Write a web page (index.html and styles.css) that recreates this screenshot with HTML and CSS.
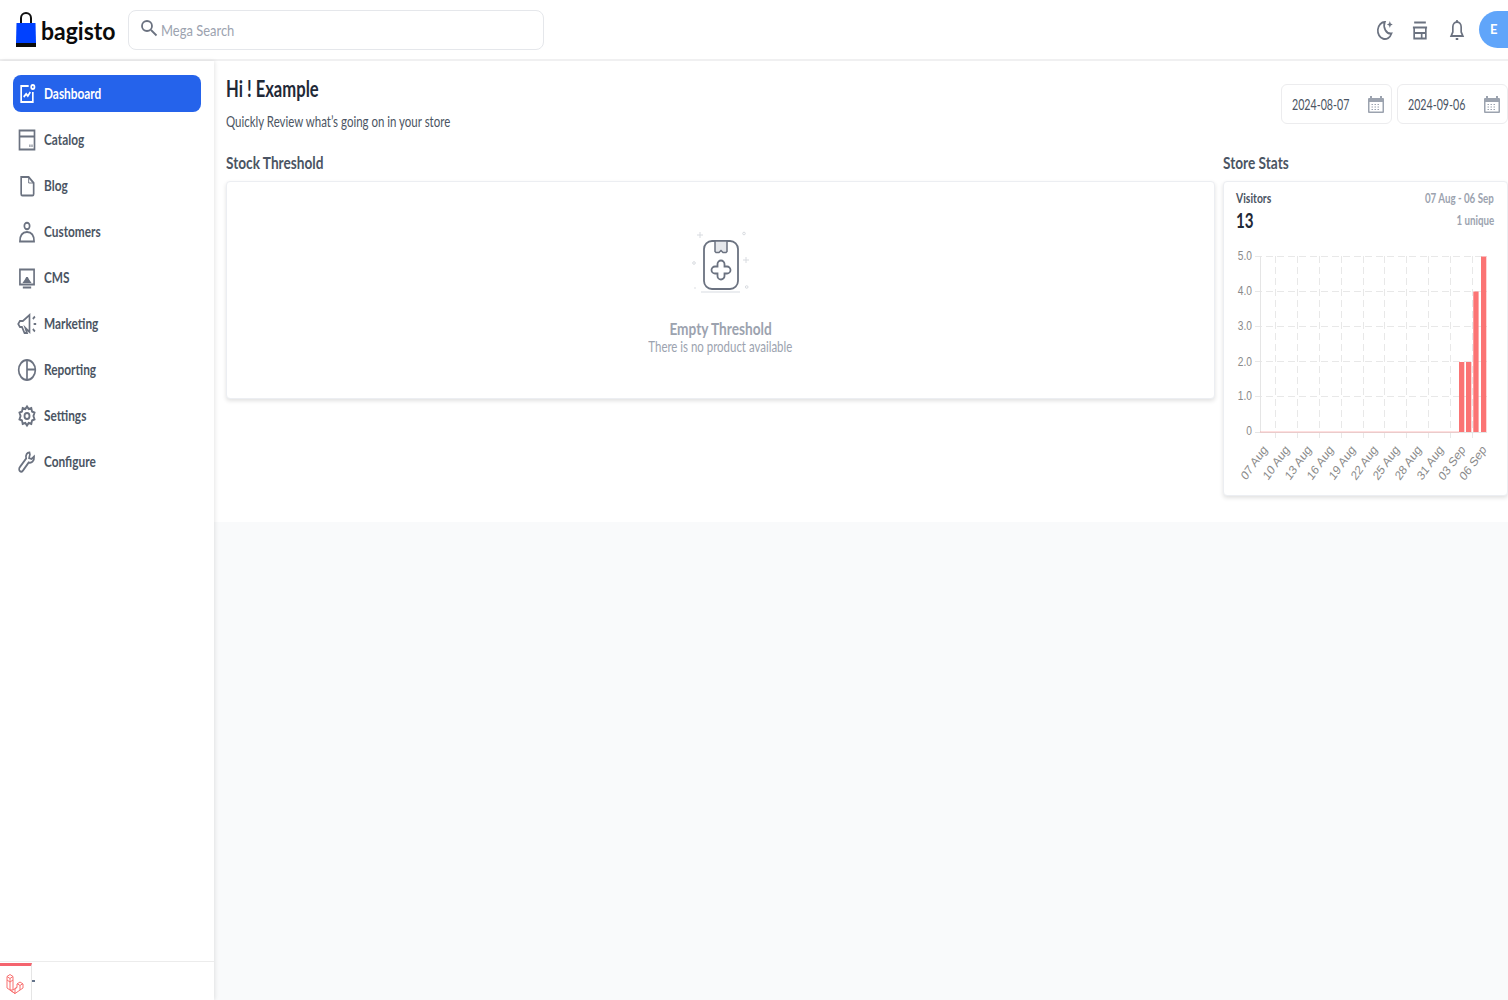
FILE: index.html
```html
<!DOCTYPE html>
<html lang="en">
<head>
<meta charset="utf-8">
<title>Dashboard</title>
<link rel="stylesheet" href="styles.css">
</head>
<body>
<header class="topbar">
  <div class="topbar-left">
    <a class="logo">
      <svg class="logo-bag" viewBox="0 0 22 36" width="22" height="36"><path d="M6 13V6a5 5 0 0 1 10 0v7" fill="none" stroke="#111" stroke-width="2"/><path d="M1.500 11h19l.5 20H1z" fill="#0041ff"/><path d="M1 31h20v4H1z" fill="#0b0b0b"/></svg>
      <span class="logo-text">bagisto</span>
    </a>
    <div class="search">
      <svg viewBox="0 0 20 20" width="20" height="20" fill="none" stroke="#6b7280" stroke-width="1.800"><circle cx="8" cy="8" r="5"/><path d="M12 12l5.500 5.500"/></svg>
      <span>Mega Search</span>
    </div>
  </div>
  <div class="topbar-right">
    <svg viewBox="0 0 24 24" width="20" height="24" preserveAspectRatio="none" fill="none" stroke="#6b7280" stroke-width="2"><path d="M13 4a8.500 8.500 0 1 0 8 11.500A8 8 0 0 1 13 4z"/><path d="M19 3l1 2.500L22.500 6.500 20 7.500 19 10l-1-2.500L15.500 6.500 18 5.500z" fill="#6b7280" stroke="none"/></svg>
    <svg viewBox="0 0 24 24" width="20" height="24" preserveAspectRatio="none" fill="none" stroke="#6b7280" stroke-width="2"><path d="M5 4.500h14M3.500 9.500h17M5 9.500v11h14v-11M5 15h14M14 15v5.500"/></svg>
    <svg viewBox="0 0 24 24" width="20" height="24" preserveAspectRatio="none" fill="none" stroke="#6b7280" stroke-width="2"><path d="M12 4a5 5 0 0 0-5 5v5l-2 4h14l-2-4V9a5 5 0 0 0-5-5z"/><path d="M12 2v2M10.500 21h3"/></svg>
    <div class="avatar">E</div>
  </div>
</header>
<div class="layout">
  <aside class="sidebar">
    <nav class="nav">
      <a class="nav-item active">
        <svg viewBox="0 0 24 24" width="20" height="24" preserveAspectRatio="none" fill="none" stroke="#fff" stroke-width="2"><path d="M14 4H5v16h14V10"/><circle cx="19" cy="5" r="2"/><path d="M8 15l3-3 2 2 3-4"/></svg>
        <span>Dashboard</span></a>
      <a class="nav-item">
        <svg viewBox="0 0 24 24" width="20" height="24" preserveAspectRatio="none" fill="none" stroke="#6b7280" stroke-width="2"><path d="M3 2.500h18v19H3zM3 8.500h18"/><path d="M15.500 16.500v2.500M18 16.500v2.500" stroke-width="1.200"/></svg>
        <span>Catalog</span></a>
      <a class="nav-item">
        <svg viewBox="0 0 24 24" width="20" height="24" preserveAspectRatio="none" fill="none" stroke="#6b7280" stroke-width="2"><path d="M5 3h9l6 6v11a1.500 1.500 0 0 1-1.500 1.500h-12A1.500 1.500 0 0 1 5 20z"/><path d="M14 3v6h6" stroke-width="1"/></svg>
        <span>Blog</span></a>
      <a class="nav-item">
        <svg viewBox="0 0 24 24" width="20" height="24" preserveAspectRatio="none" fill="none" stroke="#6b7280" stroke-width="2"><circle cx="12" cy="6" r="3.200"/><path d="M3.500 21.500c0-6.500 3-9.500 8.500-9.500s8.500 3 8.500 9.500z"/></svg>
        <span>Customers</span></a>
      <a class="nav-item">
        <svg viewBox="0 0 24 24" width="20" height="24" preserveAspectRatio="none" fill="none" stroke="#6b7280" stroke-width="2"><path d="M3.500 3.500h17v15h-17zM7 21.500h10"/><path d="M6.500 17l3-3.500 1.500-2.500h2l1.500 2.500 3 3.500z" fill="#6b7280" stroke="none"/></svg>
        <span>CMS</span></a>
      <a class="nav-item">
        <svg viewBox="0 0 24 24" width="20" height="24" preserveAspectRatio="none" fill="none" stroke="#6b7280" stroke-width="2"><path d="M15 3L7 9H3.500l-2 3 2 3H6l3 6h3l-2-5 5 4z"/><path d="M19 7l2.500-2.500M20 12h3M19 17l2.500 2.500"/></svg>
        <span>Marketing</span></a>
      <a class="nav-item">
        <svg viewBox="0 0 24 24" width="20" height="24" preserveAspectRatio="none" fill="none" stroke="#6b7280" stroke-width="2"><circle cx="12" cy="12" r="10"/><path d="M12 2v20M12 11.500h10"/></svg>
        <span>Reporting</span></a>
      <a class="nav-item">
        <svg viewBox="0 0 24 24" width="20" height="24" preserveAspectRatio="none" fill="none" stroke="#6b7280" stroke-width="2.200"><circle cx="12" cy="12" r="3"/><path d="M12 2.500l2 2.500 3.200-.8.800 3.200 3 1.300-1.300 3.300 1.300 3.300-3 1.300-.8 3.200-3.200-.8-2 2.500-2-2.500-3.200.8-.8-3.200-3-1.300L4.300 12 3 8.700l3-1.300.8-3.200 3.200.8z"/></svg>
        <span>Settings</span></a>
      <a class="nav-item">
        <svg viewBox="0 0 24 24" width="20" height="24" preserveAspectRatio="none" fill="none" stroke="#6b7280" stroke-width="2"><path d="M15 2.500c-3 0-5 2.500-4 6L3.500 17c-1.500 1.600-1 3.600 0 4.200 1.200.8 2.700.4 3.700-.7L14 12.500c3.500 1 7-1.500 6.500-6l-3 2.500-3-1 1-3.500z"/></svg>
        <span>Configure</span></a>
    </nav>
    <footer class="sidebar-foot">
      <div class="debug-tab">
        <svg viewBox="0 0 18 22" width="18" height="22" fill="none" stroke="#f87171" stroke-width="1"><path d="M1 3.500l3-2 3 2v3.500l-3 2-3-2zM4 5.500v3.500M1 3.500l3 2 3-2"/><path d="M1 7v8l8 5.500 8-5.500v-4l-3-2-3 2v3.500L7 17V7"/><path d="M4 9v8l5 3.500M11 10.500l3 2 3-2M14 12.500v4.500M7 17l-3 0M11 14l-2 1.500v5"/></svg>
      </div>
      <i class="debug-dot"></i>
    </footer>
  </aside>
  <main class="main">
    <section class="panel">
      <div class="page-head">
        <div class="page-title">
          <h1>Hi ! Example</h1>
          <p>Quickly Review what’s going on in your store</p>
        </div>
        <div class="dates">
          <div class="date"><span>2024-08-07</span>
            <svg viewBox="0 0 16 18" width="16" height="18"><path d="M1 3h14a1 1 0 0 1 1 1v13a1 1 0 0 1-1 1H1a1 1 0 0 1-1-1V4a1 1 0 0 1 1-1z" fill="#9ca3af"/><path d="M3 1v3M13 1v3" stroke="#9ca3af" stroke-width="2"/><path d="M1.500 7h13v9.500h-13z" fill="#fff"/><path d="M3.500 9.500h9M3.500 12h9M3.500 14.500h9" stroke="#9ca3af" stroke-width="1.200" stroke-dasharray="1.500 1.500"/></svg></div>
          <div class="date"><span>2024-09-06</span>
            <svg viewBox="0 0 16 18" width="16" height="18"><path d="M1 3h14a1 1 0 0 1 1 1v13a1 1 0 0 1-1 1H1a1 1 0 0 1-1-1V4a1 1 0 0 1 1-1z" fill="#9ca3af"/><path d="M3 1v3M13 1v3" stroke="#9ca3af" stroke-width="2"/><path d="M1.500 7h13v9.500h-13z" fill="#fff"/><path d="M3.500 9.500h9M3.500 12h9M3.500 14.500h9" stroke="#9ca3af" stroke-width="1.200" stroke-dasharray="1.500 1.500"/></svg></div>
        </div>
      </div>
      <div class="columns">
        <div class="col-left">
          <h2>Stock Threshold</h2>
          <div class="card empty">
            <svg class="empty-icon" viewBox="0 0 60 66" width="60" height="66" fill="none">
              <path d="M9 0v6M6 3h6M55 25v6M52 28h6" stroke="#d8dbe0" stroke-width="1"/>
              <circle cx="53" cy="1.500" r="1.300" stroke="#d8dbe0"/>
              <circle cx="3" cy="31" r="1.300" stroke="#d8dbe0"/>
              <circle cx="4" cy="56" r=".8" fill="#d8dbe0"/>
              <circle cx="55.700" cy="55" r="1.300" stroke="#d8dbe0"/>
              <rect x="13" y="9" width="34" height="48" rx="8" stroke="#6b7280" stroke-width="1.800"/>
              <path d="M24 9h12v10.500l-1 1h-3l-2-2-2 2h-3l-1-1z" fill="#e5e7eb" stroke="#6b7280" stroke-width="1.500"/>
              <path d="M26.500 34.500V32a3.500 3.500 0 0 1 7 0v2.500H36a3.500 3.500 0 0 1 0 7h-2.500V44a3.500 3.500 0 0 1-7 0v-2.500H24a3.500 3.500 0 0 1 0-7z" stroke="#6b7280" stroke-width="1.800"/>
              <path d="M10 60h39" stroke="#e5e7eb" stroke-width="1.500"/>
            </svg>
            <strong>Empty Threshold</strong>
            <span>There is no product available</span>
          </div>
        </div>
        <div class="col-right">
          <h2>Store Stats</h2>
          <div class="card stats">
            <div class="stats-row">
              <b class="stats-label">Visitors</b>
              <span class="stats-meta">07 Aug - 06 Sep</span>
            </div>
            <div class="stats-row stats-row-2">
              <b class="stats-count">13</b>
              <span class="stats-meta">1 unique</span>
            </div>
            <svg class="chart" viewBox="1224 240 284 250" width="284" height="250">
              <g stroke="#e8e8e8" stroke-width="1" stroke-dasharray="7 4" fill="none">
                <path d="M1255 256.500H1487M1255 291.500H1487M1255 326.500H1487M1255 361.500H1487M1255 396.500H1487"/>
                <path d="M1275.500 256V438M1297.500 256V438M1319.500 256V438M1341.500 256V438M1363.500 256V438M1384.500 256V438M1406.500 256V438M1428.500 256V438M1450.500 256V438M1472.500 256V438"/>
              </g>
              <path d="M1260.500 256V432M1255 432.500H1487" stroke="#e5e5e5" fill="none"/>
              <path d="M1260 432h199" stroke="#f87171" stroke-opacity=".45" stroke-width="1"/>
              <g fill="#fb7474">
                <rect x="1459" y="362" width="5.300" height="70"/>
                <rect x="1466" y="362" width="5.300" height="70"/>
                <rect x="1473.300" y="291.500" width="5.300" height="140.500"/>
                <rect x="1481" y="256.500" width="5.300" height="175.500"/>
              </g>
              <g class="y-labels" text-anchor="end" transform="translate(1252 0) scale(.85 1)">
                <text x="0" y="260.500">5.0</text>
                <text x="0" y="295.500">4.0</text>
                <text x="0" y="330.500">3.0</text>
                <text x="0" y="366">2.0</text>
                <text x="0" y="400.500">1.0</text>
                <text x="0" y="435.500">0</text>
              </g>
              <g class="x-labels" text-anchor="end">
                <text transform="translate(1268 450) scale(.85 1) rotate(-50)">07 Aug</text>
                <text transform="translate(1290 450) scale(.85 1) rotate(-50)">10 Aug</text>
                <text transform="translate(1312 450) scale(.85 1) rotate(-50)">13 Aug</text>
                <text transform="translate(1334 450) scale(.85 1) rotate(-50)">16 Aug</text>
                <text transform="translate(1356 450) scale(.85 1) rotate(-50)">19 Aug</text>
                <text transform="translate(1378 450) scale(.85 1) rotate(-50)">22 Aug</text>
                <text transform="translate(1400 450) scale(.85 1) rotate(-50)">25 Aug</text>
                <text transform="translate(1422 450) scale(.85 1) rotate(-50)">28 Aug</text>
                <text transform="translate(1444 450) scale(.85 1) rotate(-50)">31 Aug</text>
                <text transform="translate(1466 450) scale(.85 1) rotate(-50)">03 Sep</text>
                <text transform="translate(1487 450) scale(.85 1) rotate(-50)">06 Sep</text>
              </g>
            </svg>
          </div>
        </div>
      </div>
    </section>
  </main>
</div>
</body>
</html>
```
FILE: styles.css
```css
* { box-sizing: border-box; }
html, body { margin: 0; height: 100%; }
body {
  height: 1000px;
  overflow: hidden;
  background: #fff;
  color: #1f2937;
  font-family: "Lato", "Noto Sans", sans-serif;
  font-size: 14px;
}
svg { display: block; flex: none; }
h1, h2, p { margin: 0; }

.topbar {
  height: 61px;
  display: flex;
  align-items: center;
  justify-content: space-between;
  padding: 0 0 0 15px;
  border-bottom: 2px solid #f0f0f1;
  background: #fff;
}
.topbar-left { display: flex; align-items: center; gap: 13px; }
.logo { display: flex; align-items: center; gap: 4px; width: 100px; }
.logo-text { font-size: 25px; font-weight: 700; color: #0b0b0b; transform: scaleX(.92); transform-origin: left center; }
.search {
  width: 416px;
  height: 40px;
  display: flex;
  align-items: center;
  gap: 2px;
  padding: 0 10px;
  border: 1px solid #e5e7eb;
  border-radius: 8px;
  color: #9ca3af;
  font-size: 16px;
}
.search svg { margin-top: -3px; }
.search span { transform: scaleX(.81); transform-origin: left center; white-space: nowrap; }
.topbar-right { display: flex; align-items: center; gap: 16.500px; color: #6b7280; }
.avatar {
  width: 29px;
  height: 37px;
  padding-left: 11px;
  margin-left: -4px;
  border-radius: 19px 0 0 19px;
  background: #60a5fa;
  color: #fff;
  font-weight: 700;
  line-height: 37px;
  font-size: 13px;
  overflow: hidden;
}

.layout { display: flex; height: 939px; }
.sidebar {
  width: 214px;
  flex: none;
  display: flex;
  flex-direction: column;
  background: #fff;
  box-shadow: 1px 0 4px rgba(0, 0, 0, .1);
  position: relative;
  padding-top: 14px;
}
.nav { display: flex; flex-direction: column; gap: 9px; padding: 0 13px; flex: 1; }
.nav-item {
  height: 37px;
  display: flex;
  align-items: center;
  gap: 7px;
  padding-left: 4px;
  border-radius: 8px;
  color: #4b5563;
  font-size: 15px;
  font-weight: 700;
}
.nav-item span { margin-top: -2px; transform: scaleX(.79); transform-origin: left center; }
.nav-item.active { background: #2563eb; color: #fff; }
.sidebar-foot {
  height: 39px;
  display: flex;
  align-items: center;
  border-top: 1px solid #ececec;
}
.debug-tab {
  width: 32px;
  height: 37px;
  margin-top: 1px;
  border-top: 3px solid #f4646e;
  border-right: 1px solid #e5e5e5;
  padding: 7px 0 0 6px;
}
.debug-dot { width: 3px; height: 2px; background: #64748b; }

.main { flex: 1; min-width: 0; background: #f9fafb; }
.panel { height: 461px; background: #fff; padding: 15px 0 0 12px; }
.page-head { display: flex; justify-content: space-between; align-items: flex-start; }
.page-title { width: 700px; }
h1 { font-size: 22px; line-height: 26px; font-weight: 700; color: #1f2937; transform: scaleX(.755); transform-origin: left center; }
.page-title p { margin-top: 9px; margin-bottom: 1px; font-size: 15px; line-height: 20px; color: #4b5563; transform: scaleX(.765); transform-origin: left center; }
.dates { display: flex; gap: 5px; margin-top: 8px; }
.date {
  width: 111px;
  height: 40px;
  display: flex;
  align-items: center;
  justify-content: space-between;
  padding: 0 7px 0 10px;
  border: 1px solid #ececee;
  border-radius: 6px;
  color: #4b5563;
  font-size: 15px;
  white-space: nowrap;
}
.date span { width: 60px; transform: scaleX(.71); transform-origin: left center; }
.columns { display: flex; gap: 8px; margin-top: 19px; }
.col-left { width: 989px; }
.col-right { width: 285px; }
h2 { font-size: 17.500px; line-height: 24px; font-weight: 700; color: #4b5563; transform: scaleX(.78); transform-origin: left center; }
.card {
  margin-top: 6px;
  background: #fff;
  border: 1px solid #eceef2;
  border-radius: 4px;
  box-shadow: 0 2px 4px rgba(0, 0, 0, .12);
}
.empty {
  height: 218px;
  display: flex;
  flex-direction: column;
  align-items: center;
  padding-top: 50px;
}
.empty-icon { overflow: visible; }
.empty strong { margin-top: 20px; font-size: 17.500px; line-height: 22px; color: #9ca3af; transform: scaleX(.78); }
.empty span { margin-top: -1px; font-size: 15px; line-height: 14px; color: #9ca3af; transform: scaleX(.763); }
.stats { height: 315px; }
.stats-row { display: flex; justify-content: space-between; align-items: center; padding: 7px 13px 0 12px; height: 24px; }
.stats-row-2 { height: 26px; padding-top: 2px; }
.stats-label { font-size: 13.500px; color: #4b5563; transform: scaleX(.77); transform-origin: left center; }
.stats-meta { font-size: 13px; font-weight: 700; color: #9ca3af; transform: scaleX(.75); transform-origin: right center; }
.stats-count { font-size: 20px; color: #1f2937; transform: scaleX(.76); transform-origin: left center; }
.chart { margin-top: 8px; }
.chart text { font-family: "Liberation Sans", sans-serif; font-size: 13px; fill: #8a8a8a; }
.chart .y-labels text { font-size: 12px; }
```
